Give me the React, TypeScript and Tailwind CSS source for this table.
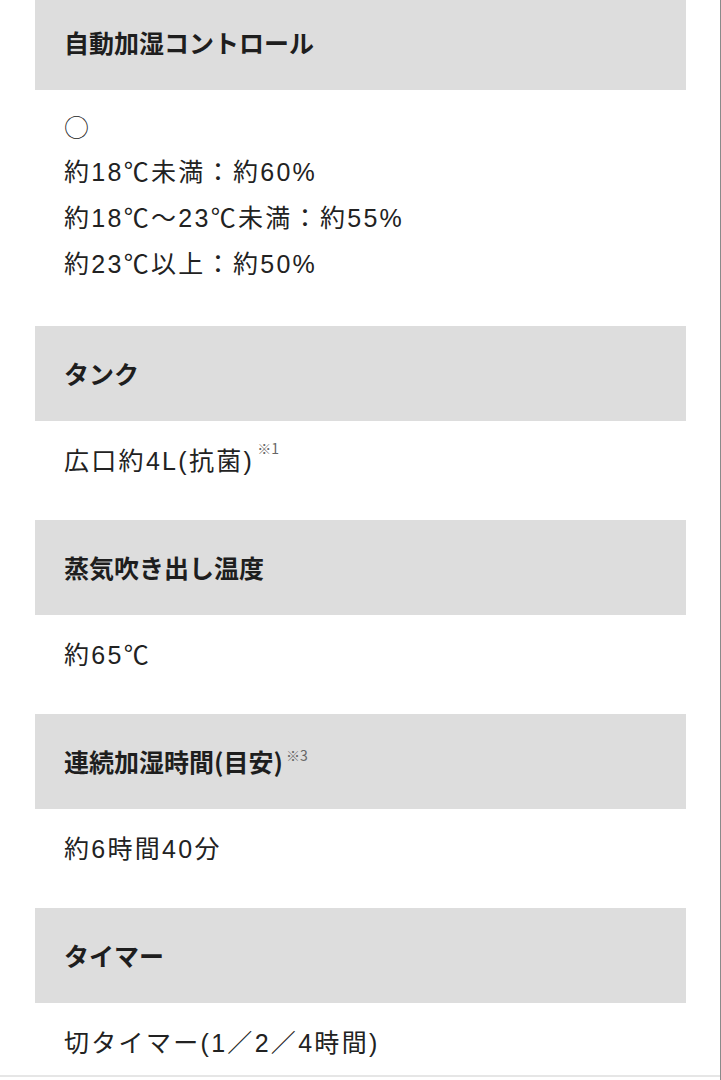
import React from "react";

const font = { fontFamily: '"Liberation Sans", "Noto Sans CJK JP", sans-serif' };
const headFont = { fontFamily: '"Noto Sans CJK JP", "Noto Sans", sans-serif' };

function Header({ children }: { children: React.ReactNode }) {
  return (
    <div
      className="bg-[#dddddd] h-[95px] flex items-center pl-[29px] text-[25px] font-bold text-[#1e1e1e] leading-none"
      style={headFont}
    >
      <div className="leading-[25px]">{children}</div>
    </div>
  );
}

function Body({ children }: { children: React.ReactNode }) {
  return (
    <div className="pl-[29px] pt-[17px] pb-[36px] text-[25px] leading-[46px] tracking-[2.3px] text-[#222]">
      {children}
    </div>
  );
}

function Sup({ children, top }: { children: React.ReactNode; top: string }) {
  return (
    <span
      className={`inline-block align-top text-[14px] leading-[14px] tracking-normal font-normal text-[#666] ml-[3px] relative ${top}`}
      style={{ fontFamily: '"Noto Sans CJK JP", sans-serif' }}
    >
      {children}
    </span>
  );
}

export default function App() {
  return (
    <div className="w-[721px] h-[1080px] overflow-hidden bg-white border-r border-[#8a8a8a] relative" style={font}>
      <div className="mx-[35px] w-[651px] mt-[-5px]">
        <Header>自動加湿コントロール</Header>
        <div className="pl-[29px] pt-[13px] pb-[39px] text-[25px] leading-[46px] tracking-[2.3px] text-[#222]">
          <div style={{ fontFamily: '"Noto Sans CJK JP", sans-serif' }} className="font-light">○</div>
          <div>約18℃未満：約60%</div>
          <div>約18℃～23℃未満：約55%</div>
          <div>約23℃以上：約50%</div>
        </div>
        <Header>タンク</Header>
        <Body>
          広口約4L(抗菌)<Sup top="top-[3px]">※1</Sup>
        </Body>
        <Header>蒸気吹き出し温度</Header>
        <Body>約65℃</Body>
        <Header>
          連続加湿時間(目安)<Sup top="top-[-1px]">※3</Sup>
        </Header>
        <Body>約6時間40分</Body>
        <Header>タイマー</Header>
        <Body>切タイマー(1／2／4時間)</Body>
      </div>
      <div className="absolute left-0 right-0 top-[1075px] h-[2px] bg-[#e6e6e6]" />
    </div>
  );
}
